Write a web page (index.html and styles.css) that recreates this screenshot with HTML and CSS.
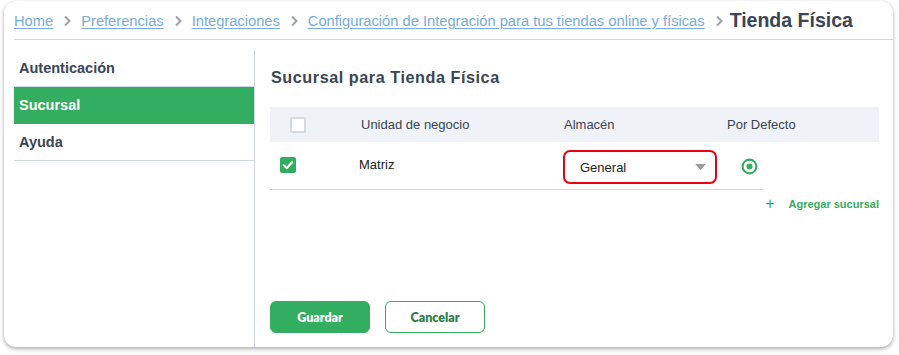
FILE: index.html
```html
<!DOCTYPE html>
<html lang="es">
<head>
<meta charset="utf-8">
<link rel="stylesheet" href="styles.css">
</head>
<body>
<div class="card">
  <nav class="crumbs">
    <a class="crumb" href="#">Home</a>
    <svg class="chev" viewBox="0 0 8 12" width="8" height="12"><path d="M2 1.5 L6.5 6 L2 10.5" fill="none" stroke="#9aa1ab" stroke-width="2"/></svg>
    <a class="crumb" href="#">Preferencias</a>
    <svg class="chev" viewBox="0 0 8 12" width="8" height="12"><path d="M2 1.5 L6.5 6 L2 10.5" fill="none" stroke="#9aa1ab" stroke-width="2"/></svg>
    <a class="crumb" href="#">Integraciones</a>
    <svg class="chev" viewBox="0 0 8 12" width="8" height="12"><path d="M2 1.5 L6.5 6 L2 10.5" fill="none" stroke="#9aa1ab" stroke-width="2"/></svg>
    <a class="crumb" href="#">Configuración de Integración para tus tiendas online y físicas</a>
    <svg class="chev" viewBox="0 0 8 12" width="8" height="12"><path d="M2 1.5 L6.5 6 L2 10.5" fill="none" stroke="#9aa1ab" stroke-width="2"/></svg>
    <span class="current">Tienda Física</span>
  </nav>
  <div class="body">
    <aside class="side">
      <div class="item">Autenticación</div>
      <div class="item active">Sucursal</div>
      <div class="item">Ayuda</div>
    </aside>
    <main class="main">
      <h2 class="title">Sucursal para Tienda Física</h2>
      <div class="thead">
        <div class="hc c1"><span class="box"></span></div>
        <div class="hc c2">Unidad de negocio</div>
        <div class="hc c3">Almacén</div>
        <div class="hc c4">Por Defecto</div>
      </div>
      <div class="trow">
        <div class="rc r1">
          <span class="box checked">
            <svg viewBox="0 0 16 16" width="16" height="16"><path d="M3.8 8.3 L6.8 11 L12.2 5.2" fill="none" stroke="#fff" stroke-width="2.2" stroke-linecap="round" stroke-linejoin="round"/></svg>
          </span>
        </div>
        <div class="rc r2">Matriz</div>
        <div class="rc r3">
          <div class="select">
            <span>General</span>
            <svg viewBox="0 0 12 8" width="11" height="7"><path d="M0 0 H12 L6 7 Z" fill="#9b9b9b"/></svg>
          </div>
        </div>
        <div class="rc r4">
          <svg viewBox="0 0 18 18" width="17" height="17"><circle cx="9" cy="9" r="7.3" fill="none" stroke="#33ad60" stroke-width="2.2"/><circle cx="9" cy="9" r="3.2" fill="#33ad60"/></svg>
        </div>
      </div>
      <div class="add">
        <span class="plus">+</span>
        <span class="addtxt">Agregar sucursal</span>
      </div>
      <div class="actions">
        <button class="btn primary">Guardar</button>
        <button class="btn secondary">Cancelar</button>
      </div>
    </main>
  </div>
</div>
</body>
</html>
```

FILE: styles.css
```css
* { box-sizing: border-box; }
html, body { margin: 0; padding: 0; background: #ffffff; }
body {
  font-family: "Liberation Sans", Arial, sans-serif;
  color: #3a4556;
  width: 899px;
  height: 355px;
  overflow: hidden;
}
.card {
  margin: 1px 0 0 4px;
  width: 889px;
  height: 346px;
  background: #fff;
  border-radius: 12px;
  box-shadow: 0 2px 4px rgba(0,0,0,0.32), 0 0 1px rgba(0,0,0,0.12);
  padding-left: 10px;
  display: flex;
  flex-direction: column;
}
.crumbs {
  height: 39px;
  border-bottom: 1px solid #cfd6df;
  display: flex;
  align-items: center;
  padding-top: 1px;
  white-space: nowrap;
}
.crumb {
  color: #74ade0;
  font-size: 14.7px;
  text-decoration: underline;
  text-underline-offset: 2px;
}
.chev { margin: 0 10px 0 10px; flex: none; }
.current {
  font-size: 19.5px;
  font-weight: bold;
  color: #3a4556;
  margin-left: -3px;
}
.body {
  flex: 1;
  display: flex;
  padding-top: 10px;
}
.side {
  width: 241px;
  border-right: 1px solid #cfd6df;
  flex: none;
}
.item {
  height: 37px;
  border-bottom: 1px solid #cfd6df;
  padding-left: 5px;
  display: flex;
  align-items: center;
  font-size: 14.5px;
  font-weight: bold;
  color: #3a4556;
}
.item.active {
  background: #33ad60;
  color: #fff;
  border-bottom-color: #33ad60;
}
.main {
  flex: 1;
  padding: 0 14px 14px 15px;
  display: flex;
  flex-direction: column;
}
.title {
  margin: 17px 0 0 1px;
  font-size: 16.2px;
  font-weight: bold;
  letter-spacing: 0.55px;
  color: #3a4556;
  height: 20px;
  line-height: 20px;
}
.thead {
  margin-top: 20px;
  height: 35px;
  background: #eff2f7;
  display: flex;
  align-items: center;
  font-size: 13px;
  color: #3a4556;
}
.hc { flex: none; }
.c1 { width: 91px; padding-left: 20px; display: flex; }
.c2 { width: 203px; }
.c3 { width: 163px; }
.box {
  width: 16px;
  height: 16px;
  border: 2px solid #d3d9e1;
  border-radius: 2px;
  display: block;
  background: #fff;
}
.box.checked {
  border: none;
  background: #33ad60;
}
.box.checked svg { display: block; }
.trow {
  width: 493px;
  height: 48px;
  border-bottom: 1px solid #cfd6df;
  display: flex;
  align-items: center;
}
.rc { flex: none; }
.r1 { width: 89px; padding-left: 10px; margin-top: -2px; display: flex; }
.r2 { width: 204px; font-size: 13px; color: #222; margin-top: -3px; }
.r3 { width: 178px; margin-top: 3px; }
.select {
  width: 154px;
  height: 34px;
  border: 2.5px solid #ec0012;
  border-radius: 7px;
  display: flex;
  align-items: center;
  justify-content: space-between;
  padding: 0 9px 0 15px;
  font-size: 13px;
  color: #222;
}
.select svg { margin-top: 1px; }
.r4 { display: flex; margin-top: 1px; }
.add {
  display: flex;
  justify-content: flex-end;
  align-items: center;
  margin-top: 6px;
  color: #33ad60;
  height: 16px;
}
.plus { font-size: 16px; font-weight: normal; margin-right: 14px; }
.addtxt { font-size: 11px; font-weight: bold; }
.actions {
  margin-top: auto;
  display: flex;
  gap: 15px;
}
.btn {
  width: 100px;
  height: 32px;
  border-radius: 6px;
  font-family: Lato, "Liberation Sans", sans-serif;
  font-weight: 800;
  font-size: 12.5px;
  cursor: pointer;
}
.primary {
  background: #33ad60;
  border: 1px solid #33ad60;
  color: #fff;
}
.secondary {
  background: #fff;
  border: 1px solid #33ad60;
  color: #2f7e48;
}
```
